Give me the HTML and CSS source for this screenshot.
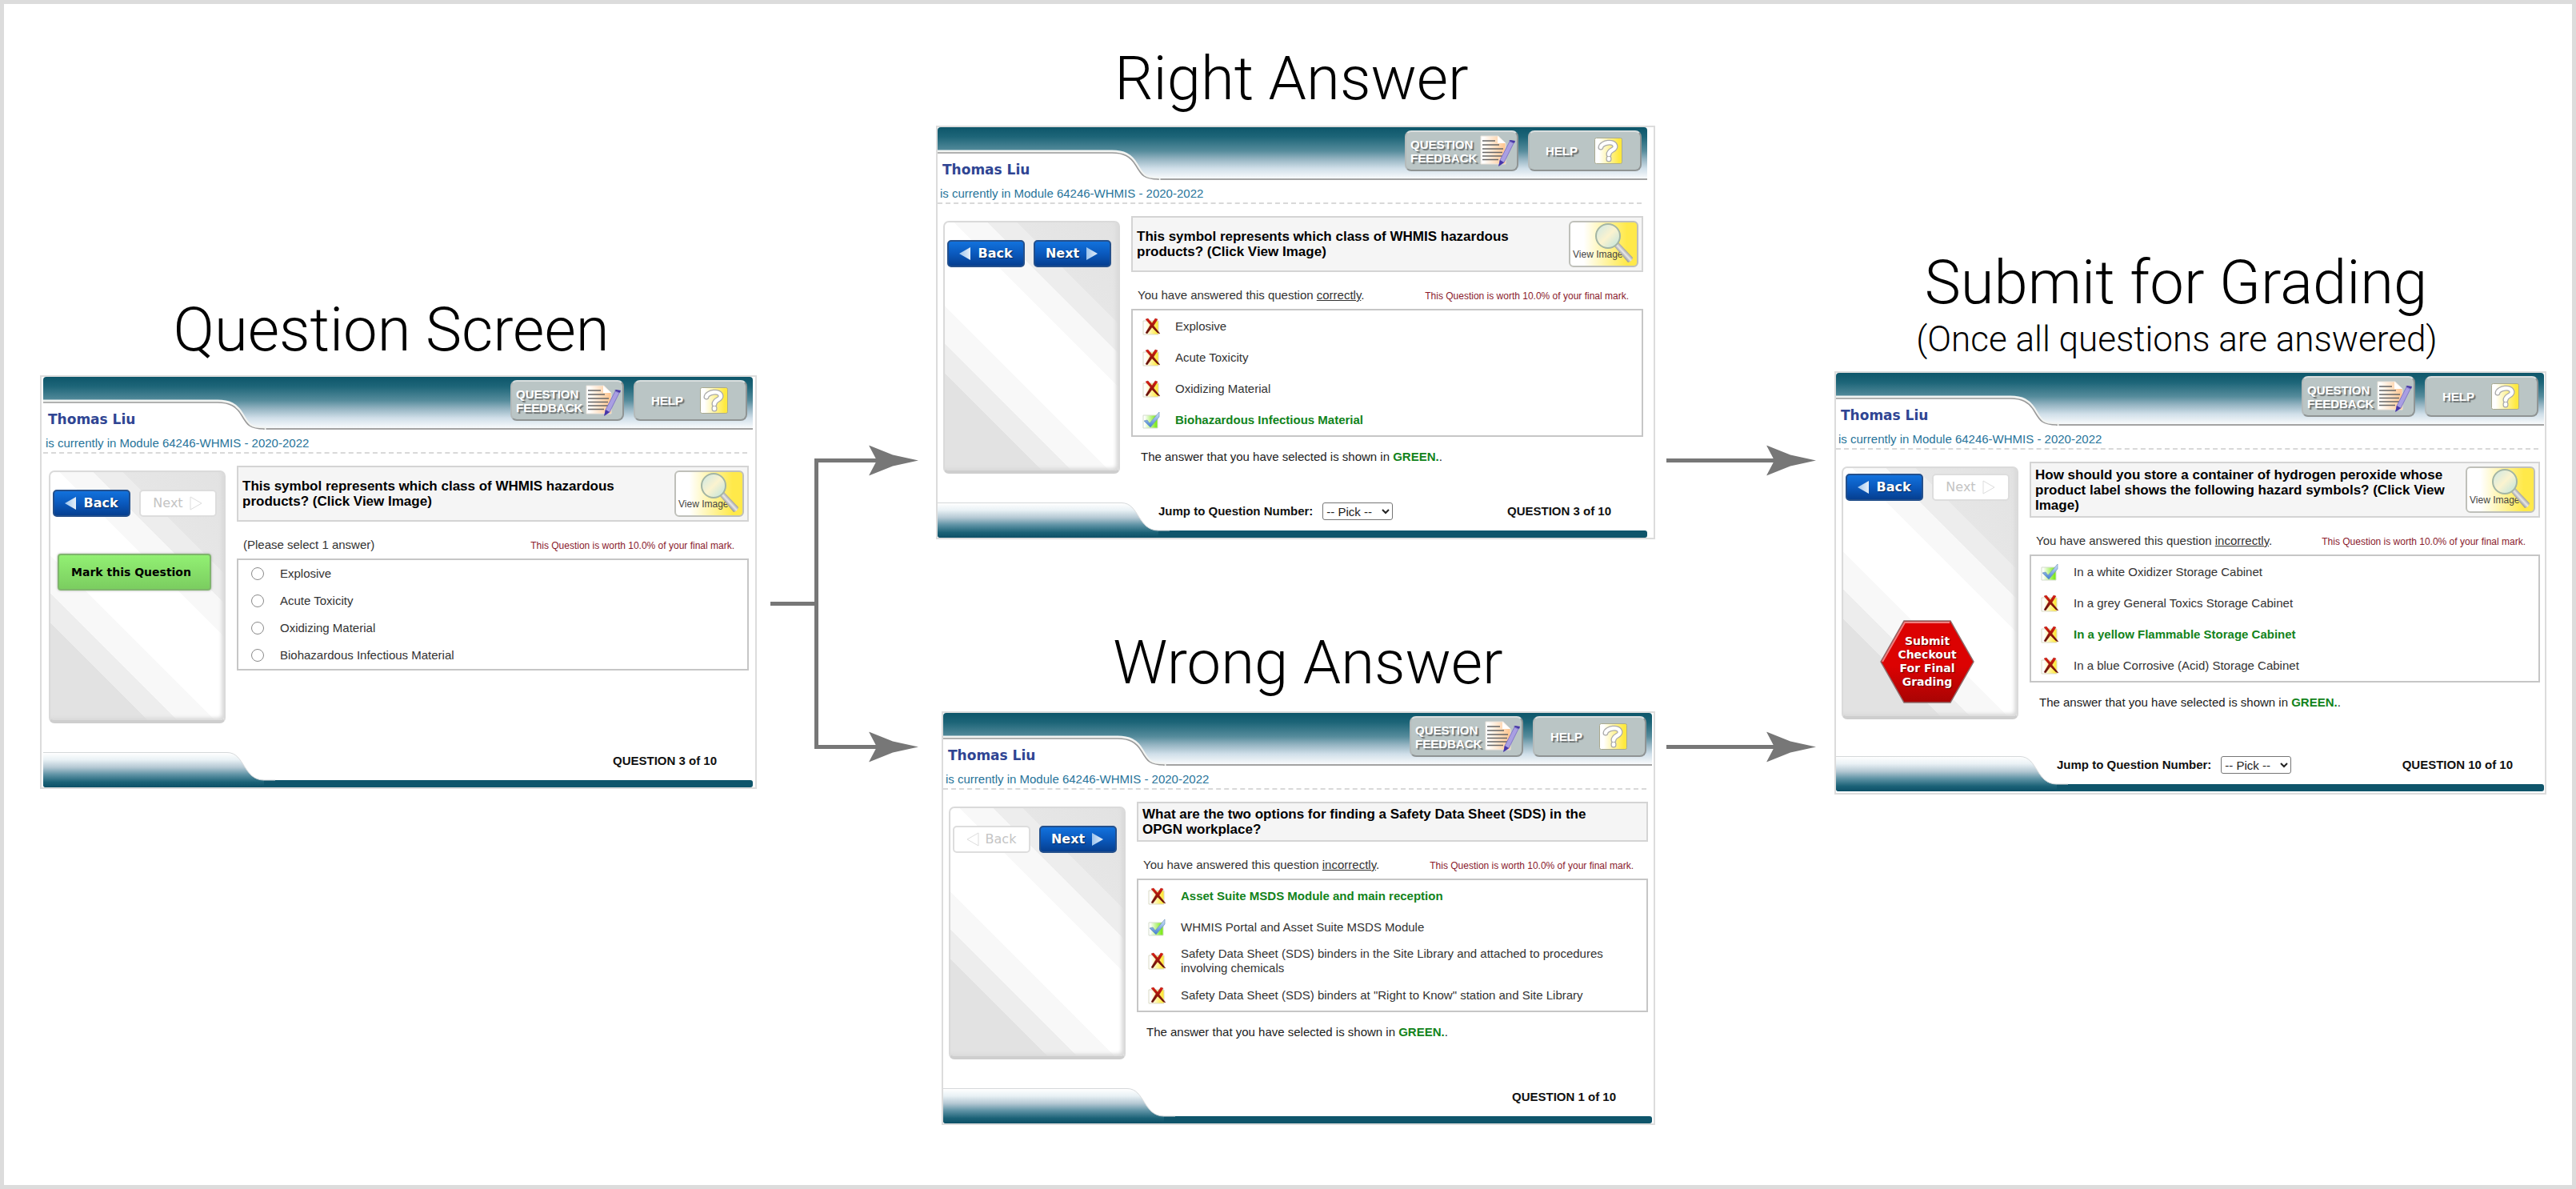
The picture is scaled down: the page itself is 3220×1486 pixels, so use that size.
FILE: index.html
```html
<!DOCTYPE html>
<html lang="en">
<head>
<meta charset="utf-8">
<title>Checkout question flow</title>
<link rel="stylesheet" href="styles.css">
</head>
<body>
<svg class="sprite" aria-hidden="true">
  <defs>
    <linearGradient id="g-head" x1="0" y1="0" x2="0" y2="1">
      <stop offset="0" stop-color="#0d566a"/><stop offset=".18" stop-color="#1d6578"/><stop offset=".45" stop-color="#568c9c"/>
      <stop offset=".6" stop-color="#93b3c1"/><stop offset=".78" stop-color="#d0dfe9"/><stop offset="1" stop-color="#ffffff"/>
    </linearGradient>
    <linearGradient id="g-foot" x1="0" y1="0" x2="0" y2="1">
      <stop offset="0" stop-color="#ffffff"/><stop offset=".2" stop-color="#e9f1f5"/><stop offset=".42" stop-color="#b4c8d3"/>
      <stop offset=".62" stop-color="#6295a7"/><stop offset=".85" stop-color="#1b6277"/><stop offset="1" stop-color="#0d5067"/>
    </linearGradient>
    <linearGradient id="g-yellow"><stop offset=".15" stop-color="#ffffff"/><stop offset=".9" stop-color="#ffe93f"/></linearGradient>
    <linearGradient id="g-green"><stop offset=".1" stop-color="#ffffff"/><stop offset=".9" stop-color="#7fea1d"/></linearGradient>
    <linearGradient id="g-peach"><stop offset=".1" stop-color="#ffffff"/><stop offset="1" stop-color="#ffc48c"/></linearGradient>
    <linearGradient id="g-blue" x1="0" y1="0" x2="0" y2="1"><stop offset="0" stop-color="#d8e6fb"/><stop offset="1" stop-color="#3f7fd0"/></linearGradient>
    <linearGradient id="g-arrow"><stop offset="0" stop-color="#9cc4ee"/><stop offset="1" stop-color="#e6eff8"/></linearGradient>
    <linearGradient id="g-red" x1="0" y1="0" x2="0" y2="1"><stop offset=".55" stop-color="#dc0202"/><stop offset="1" stop-color="#a80404"/></linearGradient>
    <linearGradient id="g-redx" x1="0" y1="0" x2="0" y2="1"><stop offset="0" stop-color="#e81c10"/><stop offset="1" stop-color="#4a1008"/></linearGradient>
    <linearGradient id="g-lens" x1="0" y1="0" x2="1" y2="1"><stop offset="0" stop-color="#c9e6e6"/><stop offset=".5" stop-color="#fbf3cf"/><stop offset="1" stop-color="#b9e3e0"/></linearGradient>
    <linearGradient id="g-handle" x1="0" y1="1" x2="1" y2="0"><stop offset=".2" stop-color="#222222"/><stop offset=".5" stop-color="#e8e8e8"/><stop offset=".8" stop-color="#333333"/></linearGradient>
  </defs>
  <symbol id="i-wrong" viewBox="0 0 22 22">
    <path d="M1 4h19v17H1z" fill="url(#g-yellow)" stroke="#d9d9c4"/>
    <path d="M4 2l3-1 5 6 4-6 3 1-5 8 8 10-3-1-7-7-6 8-2-1 6-10z" fill="url(#g-redx)" stroke="#8d1008" stroke-width=".4"/>
  </symbol>
  <symbol id="i-right" viewBox="0 0 22 22">
    <path d="M1 5h18v16H1z" fill="url(#g-green)" stroke="#d3dccb"/>
    <path d="M2 12l4-1 3 4L21 1v6L10 20z" fill="url(#g-blue)" stroke="#6f93bd" stroke-width=".7"/>
  </symbol>
  <symbol id="i-note" viewBox="0 0 44 39">
    <path d="M1 1h22l9 9v26H1z" fill="url(#g-peach)" stroke="#e8e2da"/>
    <path d="M22 1v9h10z" fill="#fff"/>
    <path d="M3 7h16M3 12h21M3 17h26M3 21.500h25M3 26h25M3 30.500h20" stroke="#666" stroke-width="1.300"/>
    <path d="M37 8l5 2-12 24-6 4 1-7z" fill="#a99fe2" stroke="#7468c4" stroke-width=".8"/>
    <path d="M36 7l7 3 1-3-6-1zM25 31l5 3-7 5z" fill="#4736a8"/>
  </symbol>
  <symbol id="i-help" viewBox="0 0 35 33">
    <rect x=".5" y=".5" width="34" height="32" rx="2" fill="url(#g-yellow)" stroke="#a9aa90"/>
    <path d="M8 12c1-6 17-9 18-1 0 5-8 4-8 10M18 26v1" fill="none" stroke="#aaa" stroke-width="7" stroke-linecap="round"/>
    <path d="M8 12c1-6 17-9 18-1 0 5-8 4-8 10M18 26v1" fill="none" stroke="#fff" stroke-width="4.500" stroke-linecap="round"/>
  </symbol>
  <symbol id="i-lens" viewBox="0 0 50 52">
    <path d="M26 30l5-5 18 19q-1 5-6 6z" fill="url(#g-handle)"/>
    <circle cx="18" cy="17" r="15" fill="url(#g-lens)" stroke="#a3b5a4" stroke-width="2"/>
  </symbol>
  <symbol id="i-prev" viewBox="0 0 16 18"><path d="M15 1v16L1 9z" fill="url(#g-arrow)"/></symbol>
  <symbol id="i-next" viewBox="0 0 16 18"><path d="M1 1v16L15 9z" fill="url(#g-arrow)"/></symbol>
  <symbol id="i-prev-off" viewBox="0 0 16 18"><path d="M15 1v16L1 9z" fill="#fff" stroke="#ddd"/></symbol>
  <symbol id="i-next-off" viewBox="0 0 16 18"><path d="M1 1v16L15 9z" fill="#fff" stroke="#ddd"/></symbol>
  <symbol id="i-head" viewBox="0 0 62 38"><path d="M0 0L30 12 62 19 30 26 0 38 10 19z" fill="#777"/></symbol>
</svg>

<main class="flow">
  <section class="stage stage-question">
    <h2 class="stage-title">Question Screen</h2>
    <article class="screen">
      <header class="top">
        <svg class="top-art" aria-hidden="true"><rect width="100%" height="66" rx="4" fill="url(#g-head)"/><rect y="64" width="100%" height="2" fill="#a3a3a3"/><path d="M-2 31H218C232 31 241 35 248 47S258 65 276 65V70H-2z" fill="#fff" stroke="#f2f4f2" stroke-width="5"/><path d="M-2 32H218C232 32 241 36 248 48S258 65 276 65V70H-2z" fill="#fff" stroke="#999" stroke-width="1.500"/></svg>
        <div class="top-row">
          <h3 class="user">Thomas Liu</h3>
          <button class="tool tool-feedback" type="button"><span>QUESTION<br>FEEDBACK</span><svg><use href="#i-note"/></svg></button>
          <button class="tool tool-help" type="button"><span>HELP</span><svg><use href="#i-help"/></svg></button>
        </div>
      </header>
      <p class="module">is currently in Module 64246-WHMIS - 2020-2022</p>
      <div class="body">
        <nav class="side">
          <div class="pager">
            <button class="nav-btn" type="button"><svg><use href="#i-prev"/></svg>Back</button>
            <button class="nav-btn" type="button" disabled>Next<svg><use href="#i-next-off"/></svg></button>
          </div>
          <button class="mark-btn" type="button">Mark this Question</button>
        </nav>
        <div class="work">
          <div class="question">
            <p class="question-text">This symbol represents which class of WHMIS hazardous products? (Click View Image)</p>
            <button class="view-btn" type="button"><span>View Image</span><svg><use href="#i-lens"/></svg></button>
          </div>
          <div class="status"><span>(Please select 1 answer)</span><span class="worth">This Question is worth 10.0% of your final mark.</span></div>
          <ul class="answers choices">
            <li><input type="radio" name="q3" id="q3a"><label for="q3a">Explosive</label></li>
            <li><input type="radio" name="q3" id="q3b"><label for="q3b">Acute Toxicity</label></li>
            <li><input type="radio" name="q3" id="q3c"><label for="q3c">Oxidizing Material</label></li>
            <li><input type="radio" name="q3" id="q3d"><label for="q3d">Biohazardous Infectious Material</label></li>
          </ul>
        </div>
      </div>
      <footer class="bottom">
        <svg class="bottom-art" aria-hidden="true"><rect y="35" width="100%" height="9" rx="3" fill="#0f556b"/><path d="M0 1H230C252 1 250 35 276 35V40Q276 44 270 44H4Q0 44 0 40z" fill="url(#g-foot)"/><path d="M0 .500H230C252 .500 250 35 276 35H290" fill="none" stroke="#d5d8da"/></svg>
        <div class="bottom-row"><strong class="count">QUESTION 3 of 10</strong></div>
      </footer>
    </article>
  </section>

  <svg class="link" viewBox="0 0 224 400" aria-hidden="true">
    <path d="M17 214.500H72M150 35.500H74.500V393.500H150" fill="none" stroke="#777" stroke-width="5"/>
    <use href="#i-head" x="140" y="16.500" width="62" height="38"/>
    <use href="#i-head" x="140" y="374.500" width="62" height="38"/>
  </svg>

  <div class="stage-pair">
  <section class="stage stage-right">
    <h2 class="stage-title">Right Answer</h2>
    <article class="screen">
      <header class="top">
        <svg class="top-art" aria-hidden="true"><rect width="100%" height="66" rx="4" fill="url(#g-head)"/><rect y="64" width="100%" height="2" fill="#a3a3a3"/><path d="M-2 31H218C232 31 241 35 248 47S258 65 276 65V70H-2z" fill="#fff" stroke="#f2f4f2" stroke-width="5"/><path d="M-2 32H218C232 32 241 36 248 48S258 65 276 65V70H-2z" fill="#fff" stroke="#999" stroke-width="1.500"/></svg>
        <div class="top-row">
          <h3 class="user">Thomas Liu</h3>
          <button class="tool tool-feedback" type="button"><span>QUESTION<br>FEEDBACK</span><svg><use href="#i-note"/></svg></button>
          <button class="tool tool-help" type="button"><span>HELP</span><svg><use href="#i-help"/></svg></button>
        </div>
      </header>
      <p class="module">is currently in Module 64246-WHMIS - 2020-2022</p>
      <div class="body">
        <nav class="side">
          <div class="pager">
            <button class="nav-btn" type="button"><svg><use href="#i-prev"/></svg>Back</button>
            <button class="nav-btn" type="button">Next<svg><use href="#i-next"/></svg></button>
          </div>
        </nav>
        <div class="work">
          <div class="question">
            <p class="question-text">This symbol represents which class of WHMIS hazardous products? (Click View Image)</p>
            <button class="view-btn" type="button"><span>View Image</span><svg><use href="#i-lens"/></svg></button>
          </div>
          <div class="status"><span>You have answered this question <u>correctly</u>.</span><span class="worth">This Question is worth 10.0% of your final mark.</span></div>
          <ul class="answers">
            <li><svg><use href="#i-wrong"/></svg><span>Explosive</span></li>
            <li><svg><use href="#i-wrong"/></svg><span>Acute Toxicity</span></li>
            <li><svg><use href="#i-wrong"/></svg><span>Oxidizing Material</span></li>
            <li><svg><use href="#i-right"/></svg><b>Biohazardous Infectious Material</b></li>
          </ul>
          <p class="note">The answer that you have selected is shown in <b>GREEN.</b>.</p>
        </div>
      </div>
      <footer class="bottom">
        <svg class="bottom-art" aria-hidden="true"><rect y="35" width="100%" height="9" rx="3" fill="#0f556b"/><path d="M0 1H230C252 1 250 35 276 35V40Q276 44 270 44H4Q0 44 0 40z" fill="url(#g-foot)"/><path d="M0 .500H230C252 .500 250 35 276 35H290" fill="none" stroke="#d5d8da"/></svg>
        <div class="bottom-row">
          <label class="jump" for="jump3">Jump to Question Number:</label>
          <select class="pick" id="jump3"><option>-- Pick --</option></select>
          <strong class="count">QUESTION 3 of 10</strong>
        </div>
      </footer>
    </article>
  </section>

  <section class="stage stage-wrong">
    <h2 class="stage-title">Wrong Answer</h2>
    <article class="screen">
      <header class="top">
        <svg class="top-art" aria-hidden="true"><rect width="100%" height="66" rx="4" fill="url(#g-head)"/><rect y="64" width="100%" height="2" fill="#a3a3a3"/><path d="M-2 31H218C232 31 241 35 248 47S258 65 276 65V70H-2z" fill="#fff" stroke="#f2f4f2" stroke-width="5"/><path d="M-2 32H218C232 32 241 36 248 48S258 65 276 65V70H-2z" fill="#fff" stroke="#999" stroke-width="1.500"/></svg>
        <div class="top-row">
          <h3 class="user">Thomas Liu</h3>
          <button class="tool tool-feedback" type="button"><span>QUESTION<br>FEEDBACK</span><svg><use href="#i-note"/></svg></button>
          <button class="tool tool-help" type="button"><span>HELP</span><svg><use href="#i-help"/></svg></button>
        </div>
      </header>
      <p class="module">is currently in Module 64246-WHMIS - 2020-2022</p>
      <div class="body">
        <nav class="side">
          <div class="pager">
            <button class="nav-btn" type="button" disabled><svg><use href="#i-prev-off"/></svg>Back</button>
            <button class="nav-btn" type="button">Next<svg><use href="#i-next"/></svg></button>
          </div>
        </nav>
        <div class="work">
          <div class="question">
            <p class="question-text">What are the two options for finding a Safety Data Sheet (SDS) in the OPGN workplace?</p>
          </div>
          <div class="status"><span>You have answered this question <u>incorrectly</u>.</span><span class="worth">This Question is worth 10.0% of your final mark.</span></div>
          <ul class="answers">
            <li><svg><use href="#i-wrong"/></svg><b>Asset Suite MSDS Module and main reception</b></li>
            <li><svg><use href="#i-right"/></svg><span>WHMIS Portal and Asset Suite MSDS Module</span></li>
            <li><svg><use href="#i-wrong"/></svg><span>Safety Data Sheet (SDS) binders in the Site Library and attached to procedures involving chemicals</span></li>
            <li><svg><use href="#i-wrong"/></svg><span>Safety Data Sheet (SDS) binders at "Right to Know" station and Site Library</span></li>
          </ul>
          <p class="note">The answer that you have selected is shown in <b>GREEN.</b>.</p>
        </div>
      </div>
      <footer class="bottom">
        <svg class="bottom-art" aria-hidden="true"><rect y="35" width="100%" height="9" rx="3" fill="#0f556b"/><path d="M0 1H230C252 1 250 35 276 35V40Q276 44 270 44H4Q0 44 0 40z" fill="url(#g-foot)"/><path d="M0 .500H230C252 .500 250 35 276 35H290" fill="none" stroke="#d5d8da"/></svg>
        <div class="bottom-row"><strong class="count">QUESTION 1 of 10</strong></div>
      </footer>
    </article>
  </section>
  </div>

  <svg class="link" viewBox="0 0 224 400" aria-hidden="true">
    <path d="M14 35.500H150M14 393.500H150" fill="none" stroke="#777" stroke-width="5"/>
    <use href="#i-head" x="139" y="16.500" width="62" height="38"/>
    <use href="#i-head" x="139" y="374.500" width="62" height="38"/>
  </svg>

  <section class="stage stage-submit">
    <h2 class="stage-title">Submit for Grading</h2>
    <p class="stage-sub">(Once all questions are answered)</p>
    <article class="screen">
      <header class="top">
        <svg class="top-art" aria-hidden="true"><rect width="100%" height="66" rx="4" fill="url(#g-head)"/><rect y="64" width="100%" height="2" fill="#a3a3a3"/><path d="M-2 31H218C232 31 241 35 248 47S258 65 276 65V70H-2z" fill="#fff" stroke="#f2f4f2" stroke-width="5"/><path d="M-2 32H218C232 32 241 36 248 48S258 65 276 65V70H-2z" fill="#fff" stroke="#999" stroke-width="1.500"/></svg>
        <div class="top-row">
          <h3 class="user">Thomas Liu</h3>
          <button class="tool tool-feedback" type="button"><span>QUESTION<br>FEEDBACK</span><svg><use href="#i-note"/></svg></button>
          <button class="tool tool-help" type="button"><span>HELP</span><svg><use href="#i-help"/></svg></button>
        </div>
      </header>
      <p class="module">is currently in Module 64246-WHMIS - 2020-2022</p>
      <div class="body">
        <nav class="side">
          <div class="pager">
            <button class="nav-btn" type="button"><svg><use href="#i-prev"/></svg>Back</button>
            <button class="nav-btn" type="button" disabled>Next<svg><use href="#i-next-off"/></svg></button>
          </div>
          <button class="submit-btn" type="button">
            <svg viewBox="0 0 118 104"><path d="M1 52L30 1H88L117 52 88 103H30z" fill="url(#g-red)" stroke="#8d6a6a" stroke-width="1.500"/><path d="M3 52L31 3H87" fill="none" stroke="#ee8080" stroke-width="2"/></svg>
            <span>Submit<br>Checkout<br>For Final<br>Grading</span>
          </button>
        </nav>
        <div class="work">
          <div class="question">
            <p class="question-text">How should you store a container of hydrogen peroxide whose product label shows the following hazard symbols? (Click View Image)</p>
            <button class="view-btn" type="button"><span>View Image</span><svg><use href="#i-lens"/></svg></button>
          </div>
          <div class="status"><span>You have answered this question <u>incorrectly</u>.</span><span class="worth">This Question is worth 10.0% of your final mark.</span></div>
          <ul class="answers">
            <li><svg><use href="#i-right"/></svg><span>In a white Oxidizer Storage Cabinet</span></li>
            <li><svg><use href="#i-wrong"/></svg><span>In a grey General Toxics Storage Cabinet</span></li>
            <li><svg><use href="#i-wrong"/></svg><b>In a yellow Flammable Storage Cabinet</b></li>
            <li><svg><use href="#i-wrong"/></svg><span>In a blue Corrosive (Acid) Storage Cabinet</span></li>
          </ul>
          <p class="note">The answer that you have selected is shown in <b>GREEN.</b>.</p>
        </div>
      </div>
      <footer class="bottom">
        <svg class="bottom-art" aria-hidden="true"><rect y="35" width="100%" height="9" rx="3" fill="#0f556b"/><path d="M0 1H230C252 1 250 35 276 35V40Q276 44 270 44H4Q0 44 0 40z" fill="url(#g-foot)"/><path d="M0 .500H230C252 .500 250 35 276 35H290" fill="none" stroke="#d5d8da"/></svg>
        <div class="bottom-row">
          <label class="jump" for="jump10">Jump to Question Number:</label>
          <select class="pick" id="jump10"><option>-- Pick --</option></select>
          <strong class="count">QUESTION 10 of 10</strong>
        </div>
      </footer>
    </article>
  </section>
</main>
</body>
</html>
```
FILE: styles.css
```css
* { box-sizing: border-box; }

body {
  margin: 0;
  background: #fff;
  color: #333;
  font: 15px/18px "Liberation Sans", Arial, sans-serif;
}

h2, h3, p, ul { margin: 0; padding: 0; }
button { padding: 0; border: 0; font: inherit; cursor: pointer; }
.sprite { position: absolute; width: 0; height: 0; }

/* Flow chart */
.flow {
  display: grid;
  grid-template-columns: 896fr 224fr 899fr 224fr 890fr;
  align-items: start;
  min-height: 100vh;
  padding: 0 32px 40px 45px;
  border: 5px solid #dcdcdc;
}

.stage-title {
  margin-bottom: 14px;
  color: #000;
  font: 300 76px/90px Roboto, sans-serif;
  text-align: center;
}
.stage-sub {
  margin-bottom: 14px;
  padding-right: 34px;
  color: #000;
  font: 300 44px/52px Roboto, sans-serif;
  text-align: center;
}

.stage-question { padding-top: 362px; }
.stage-question .stage-title { margin-bottom: 12px; padding-right: 18px; }
.stage-right { padding-top: 48px; }
.stage-right .stage-title { padding-right: 10px; }
.stage-wrong { padding: 109px 0 0 7px; }
.stage-wrong .stage-title { margin-bottom: 16px; padding-left: 24px; }
.stage-submit { padding-top: 303px; }
.stage-submit .stage-title { margin: 0; padding-right: 36px; }

.link { width: 100%; margin-top: 535px; overflow: visible; }

/* Screen frame */
.screen { border: 2px solid #dcdcdc; }
.stage-question .screen { padding: 0 3px 0 2px; }
.stage-right .screen { padding-right: 8px; }
.stage-wrong .screen { padding-right: 2px; }
.stage-submit .screen { padding: 0 1px 2px 0; }

.top, .bottom { display: grid; }
.top > *, .bottom > * { grid-area: 1 / 1; }
.top-art { width: 100%; height: 66px; }
.bottom-art { width: 100%; height: 44px; }

.top-row {
  display: flex;
  align-items: flex-start;
  gap: 12px;
  padding: 4px 7px 0 6px;
}
.user {
  flex: 1;
  align-self: flex-end;
  padding-bottom: 3px;
  color: #2f4593;
  font: bold 17px/20px "DejaVu Sans", sans-serif;
}

.tool {
  display: flex;
  align-items: center;
  justify-content: space-between;
  width: 142px;
  height: 51px;
  border: 2px solid;
  border-color: #d9dede #8f9494 #8f9494 #b4baba;
  border-radius: 8px;
  background: #bac5c5;
  color: #fff;
  font-weight: bold;
  line-height: 17px;
  text-align: left;
  text-shadow: 2px 2px 1px #6b7070;
}
.tool-feedback { padding: 0 2px 0 5px; }
.tool-feedback svg { flex: none; width: 44px; height: 39px; }
.tool-help { padding: 0 22px 0 20px; }
.tool-help svg { width: 35px; height: 33px; }

.module {
  height: 30px;
  margin-right: 7px;
  padding: 8px 0 0 3px;
  border-bottom: 2px dashed #d9d9d9;
  color: #28749a;
}

.body {
  display: flex;
  gap: 14px;
  padding: 15px 5px 36px 7px;
}
.stage-submit .body { padding-bottom: 46px; }

/* Side panel */
.side {
  display: flex;
  flex-direction: column;
  align-items: center;
  width: 221px;
  min-height: 316px;
  margin-top: 6px;
  padding-top: 22px;
  border: 2px solid #dadada;
  border-bottom: 4px solid #cecece;
  border-radius: 7px;
  background: linear-gradient(225deg,
    #e2e2e2 0, #e6e6e6 24%, #ededed 24%, #ededed 31%,
    #f8f8f8 31%, #f8f8f8 39%, #fff 39%, #fff 61%,
    #f8f8f8 61%, #f8f8f8 70%, #ededed 70%, #ededed 77%, #e2e2e2 77%);
  box-shadow: inset -3px -3px 4px #dadada;
}
.stage-submit .side { padding-top: 7px; }

.pager { display: flex; gap: 11px; margin-right: 7px; }
.nav-btn {
  display: flex;
  align-items: center;
  justify-content: center;
  gap: 8px;
  width: 97px;
  height: 34px;
  border: 2px solid #24508c;
  border-radius: 5px;
  background: linear-gradient(#1272dd, #0a59bd 50%, #063f90);
  color: #fff;
  font: bold 16px/20px "DejaVu Sans", sans-serif;
  text-shadow: 1px 1px 1px #0a2a5c;
}
.nav-btn svg { width: 16px; height: 18px; }
.nav-btn:disabled {
  border-color: #ddd;
  background: #fff;
  color: #c4c4c4;
  font-weight: normal;
  text-shadow: none;
}

.mark-btn {
  width: 192px;
  height: 46px;
  margin: 46px 7px 0 0;
  padding-right: 8px;
  border: 2px solid #7fb56c;
  border-radius: 4px;
  background: linear-gradient(#92f073, #7bcd60);
  box-shadow: 0 0 3px #aaa;
  color: #000;
  font: bold 14px/18px "DejaVu Sans", sans-serif;
}

.submit-btn {
  display: grid;
  place-items: center;
  width: 118px;
  margin: auto 7px 16px 0;
  background: none;
  color: #fff;
  font: bold 14px/17px "DejaVu Sans", sans-serif;
  text-shadow: 1px 1px 1px #600;
}
.submit-btn > * { grid-area: 1 / 1; }
.submit-btn svg { width: 118px; height: 104px; }

/* Question area */
.work { flex: 1; }
.question {
  display: flex;
  align-items: center;
  justify-content: space-between;
  gap: 20px;
  padding: 4px 4px 4px 5px;
  border: 2px solid #d4d4d4;
  background: #f5f5f5;
}
.question-text {
  max-width: 568px;
  color: #000;
  font: bold 17px/19px "Liberation Sans", Arial, sans-serif;
}

.view-btn {
  display: grid;
  flex: none;
  width: 87px;
  height: 58px;
  border: 2px solid #bfc0ba;
  border-radius: 6px;
  background: linear-gradient(90deg, #fff 20%, #ffe94a 85%);
  color: #444;
  font: 12px/16px "Liberation Sans", Arial, sans-serif;
}
.view-btn > * { grid-area: 1 / 1; }
.view-btn svg { width: 50px; height: 52px; justify-self: end; margin-right: 4px; }
.view-btn span { place-self: end start; padding: 0 0 6px 3px; }

.status {
  display: flex;
  align-items: baseline;
  justify-content: space-between;
  padding: 20px 18px 7px 8px;
}
.worth { color: #8a1a2c; font-size: 12px; }

.answers {
  border: 2px solid #c6c6c6;
  list-style: none;
}
.answers li {
  display: flex;
  align-items: center;
  gap: 19px;
  min-height: 39px;
  padding: 5px 24px 5px 12px;
}
.answers svg { flex: none; width: 22px; height: 22px; }
.choices li { gap: 20px; min-height: 34px; padding: 5px 16px; }
.choices input {
  appearance: none;
  width: 16px;
  height: 16px;
  margin: 0;
  border: 1px solid #8a8a8a;
  border-radius: 50%;
}
.answers b, .note b { color: #12831b; }

.note { padding: 16px 12px 0; color: #222; }

.bottom-row {
  display: flex;
  align-items: flex-start;
  padding: 0 45px 0 276px;
  color: #111;
  font-weight: bold;
  line-height: 21px;
}
.stage-submit .bottom-row { padding-right: 39px; }
.pick {
  width: 88px;
  height: 22px;
  margin-left: 12px;
  padding: 0;
  border: 1px solid #767676;
  border-radius: 3px;
  background: #fff;
  color: #222;
  font: 15px/18px "Liberation Sans", Arial, sans-serif;
}
.count { margin-left: auto; }
```
